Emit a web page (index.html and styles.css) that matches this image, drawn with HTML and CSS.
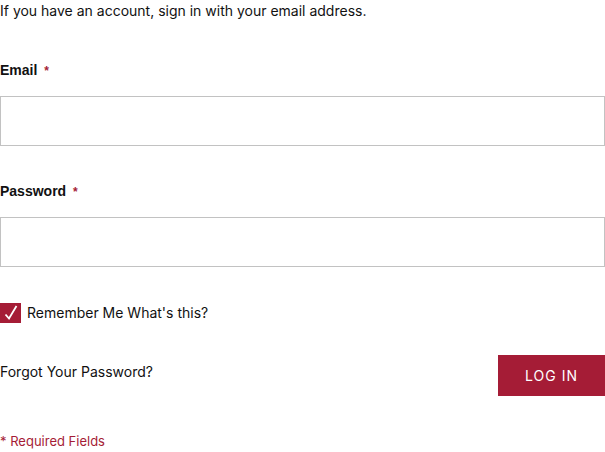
FILE: index.html
```html
<!DOCTYPE html>
<html>
<head>
<meta charset="utf-8">
<link rel="stylesheet" href="styles.css">
</head>
<body>
<form class="login">
  <p class="intro">If you have an account, sign in with your email address.</p>
  <div class="field">
    <label class="label">Email <span class="req">*</span></label>
    <input class="input" type="email">
  </div>
  <div class="field">
    <label class="label">Password <span class="req">*</span></label>
    <input class="input" type="password">
  </div>
  <div class="remember">
    <span class="check"><svg width="14" height="16" viewBox="0 0 14 16"><path d="M1.5 9.5 L5 13.5 L12.5 1" fill="none" stroke="#fff" stroke-width="1.8"/></svg></span>
    <span>Remember Me What's this?</span>
  </div>
  <div class="actions">
    <a class="forgot">Forgot Your Password?</a>
    <button class="btn" type="button">LOG IN</button>
  </div>
  <p class="required">* Required Fields</p>
</form>
</body>
</html>
```
FILE: styles.css
```css
* { box-sizing: border-box; }
body {
  margin: 0;
  font-family: Inter, "Liberation Sans", sans-serif;
  font-size: 14px;
  color: #111;
  background: #fff;
}
.login { width: 605px; }
.intro { margin: 0; padding-top: 2px; line-height: 18px; }
.field { display: flex; flex-direction: column; }
.label {
  font-family: "Liberation Sans", Arial, sans-serif;
  font-weight: bold;
  font-size: 14px;
  line-height: 16px;
  margin-top: 42px;
  margin-bottom: 17px;
}
.field + .field .label { margin-top: 37px; }
.req { color: #a51c36; font-size: 12px; margin-left: 3px; }
.input {
  height: 50px;
  border: 1px solid #c2c2c2;
  width: 605px;
  margin: 0;
}
.remember {
  display: flex;
  align-items: center;
  gap: 6px;
  margin-top: 36px;
  line-height: 20px;
}
.check {
  width: 21px; height: 20px;
  background: #a51c36;
  display: flex; align-items: center; justify-content: center;
}
.actions {
  display: flex;
  justify-content: space-between;
  align-items: flex-start;
  margin-top: 32px;
}
.forgot { line-height: 18px; margin-top: 8px; }
.btn {
  width: 107px; height: 41px;
  background: #a51c36;
  color: #fff;
  border: 0;
  font-family: Inter, "Liberation Sans", sans-serif;
  font-size: 14px;
  letter-spacing: 1px;
  padding: 0;
}
.required {
  margin: 37px 0 0;
  color: #a51c36;
  font-size: 13px;
  line-height: 16px;
}
```
